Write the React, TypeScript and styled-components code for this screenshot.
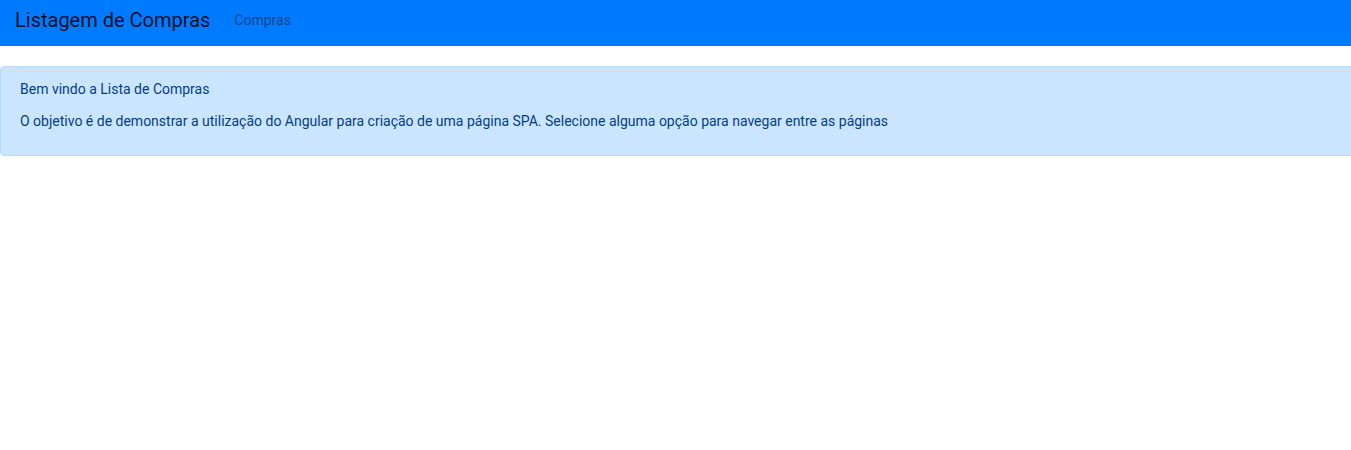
import React from 'react';
import styled, { createGlobalStyle } from 'styled-components';

const GlobalStyle = createGlobalStyle`
  * { box-sizing: border-box; }
  body {
    margin: 0;
    font-family: Roboto, "Liberation Sans", Arial, sans-serif;
    font-size: 14px;
    line-height: 1.5;
    color: #212529;
    background: #fff;
    overflow-x: hidden;
  }
`;

const Navbar = styled.nav`
  display: flex;
  align-items: center;
  background-color: #007bff;
  padding: 5px 15px 11px;
  height: 46px;
`;

const Brand = styled.a`
  font-size: 20px;
  line-height: 30px;
  color: rgba(0, 0, 0, 0.9);
  margin-right: 16px;
  text-decoration: none;
  cursor: pointer;
`;

const NavList = styled.ul`
  display: flex;
  list-style: none;
  margin: 0;
  padding: 0;
`;

const NavLink = styled.a`
  display: block;
  padding: 8px;
  font-size: 14px;
  line-height: 21px;
  color: rgba(0, 0, 0, 0.5);
  text-decoration: none;
  cursor: pointer;
  &:hover { color: rgba(0, 0, 0, 0.7); }
`;

const Main = styled.main`
  padding-top: 20px;
`;

const Alert = styled.div`
  background-color: #cce5ff;
  border: 1px solid #b8daff;
  border-radius: 4px;
  color: #004085;
  padding: 12px 19px;
  margin-right: -4px;
`;

const Para = styled.p<{ $last?: boolean }>`
  margin: 0 0 ${p => (p.$last ? '11.5px' : '10.5px')};
  font-size: 14px;
  line-height: 21px;
`;

const App = () => {
  return (
    <>
      <GlobalStyle />
      <Navbar>
        <Brand>Listagem de Compras</Brand>
        <NavList>
          <li><NavLink>Compras</NavLink></li>
        </NavList>
      </Navbar>
      <Main>
        <Alert>
          <Para>Bem vindo a Lista de Compras</Para>
          <Para $last>
            O objetivo é de demonstrar a utilização do Angular para criação de uma página SPA. Selecione alguma opção para navegar entre as páginas
          </Para>
        </Alert>
      </Main>
    </>
  );
};

export default App;
